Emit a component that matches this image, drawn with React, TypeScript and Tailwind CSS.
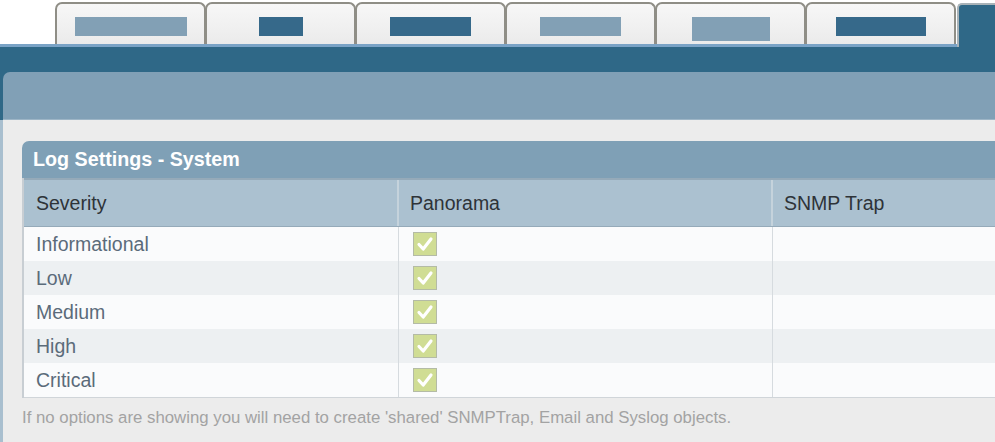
import React from "react";

const tabs = [
  { w: "w-[112px]", h: "h-[19px]", c: "bg-[#82a0b5]" },
  { w: "w-[44px]", h: "h-[19px]", c: "bg-[#36698a]" },
  { w: "w-[81px]", h: "h-[19px]", c: "bg-[#36698a]" },
  { w: "w-[81px]", h: "h-[19px]", c: "bg-[#82a0b5]" },
  { w: "w-[78px]", h: "h-[24px]", c: "bg-[#82a0b5]" },
  { w: "w-[90px]", h: "h-[19px]", c: "bg-[#36698a]" },
];

const rows = ["Informational", "Low", "Medium", "High", "Critical"];

function Check() {
  return (
    <div className="w-[24px] h-[24px] border border-[#b4bba6] bg-[#d0dd94] flex items-center justify-center">
      <svg width="18" height="16" viewBox="0 0 18 16">
        <path d="M3 8.5 L7.2 13 L15 3" fill="none" stroke="#ffffff" strokeWidth="3.2" strokeLinecap="round" strokeLinejoin="round" />
      </svg>
    </div>
  );
}

export default function App() {
  return (
    <div
      className="w-[995px] h-[442px] overflow-hidden bg-[#ececec] flex flex-col"
      style={{ fontFamily: '"Liberation Sans", Arial, sans-serif' }}
    >
      {/* tab strip */}
      <div className="flex h-[47px] shrink-0">
        <div className="w-[957px] flex flex-col bg-white">
          <div className="h-[44px] flex items-end pl-[55px]">
            {tabs.map((t, i) => (
              <div
                key={i}
                className={`w-[151px] h-[42px] ${i > 0 ? "-ml-px" : ""} border-[2px] border-b-0 border-[#8f8e86] rounded-t-[7px] bg-gradient-to-b from-[#f7f7f7] to-[#ebebeb] flex justify-center pt-[13px]`}
              >
                <div className={`${t.w} ${t.h} ${t.c}`} />
              </div>
            ))}
          </div>
          <div className="h-[3px] bg-[#7aa3c6]" />
        </div>
        <div className="flex-1 bg-white pt-[3px]">
          <div className="h-full bg-[#2f6887] rounded-tl-[5px] border-l-2 border-t-2 border-[#a9b3b8]" />
        </div>
      </div>

      {/* dark band + light header */}
      <div className="bg-[#2f6887] pt-[25px] pl-[3px] shrink-0">
        <div className="h-[48px] bg-[#81a0b6] rounded-tl-[7px] border-b border-[#9db5c6]" />
      </div>

      {/* content */}
      <div className="flex-1 border-l-[3px] border-[#a9bfcf] pl-[19px] pt-[21px]">
        <div className="rounded-tl-[7px] bg-[#7fa0b6] h-[37px] flex items-center pl-[11px] pt-[1px] text-white font-bold text-[19.7px]">
          Log Settings - System
        </div>
        <div className="border-l-2 border-[#c8ced3] bg-white">
          <div className="flex h-[49px] bg-[#abc1d0] border-t-2 border-[#9aabb7] border-b border-[#95aab9] text-[#2e3338] text-[19.5px]">
            <div className="w-[375px] flex items-center pl-[12px] pt-[2px] border-r-2 border-[#c5d3dc]">Severity</div>
            <div className="w-[374px] flex items-center pl-[11px] pt-[2px] border-r-2 border-[#c5d3dc]">Panorama</div>
            <div className="flex-1 flex items-center pl-[11px] pt-[2px]">SNMP Trap</div>
          </div>
          {rows.map((r, i) => (
            <div
              key={r}
              className={`flex h-[34px] text-[19.5px] text-[#5b6b7a] ${i % 2 ? "bg-[#edf0f2]" : "bg-[#fafbfc]"}`}
            >
              <div className="w-[375px] flex items-center pl-[12px] pt-[2px] border-r border-[#d6dbdf]">{r}</div>
              <div className="w-[374px] flex items-center pl-[14px] border-r border-[#d6dbdf]">
                <Check />
              </div>
              <div className="flex-1" />
            </div>
          ))}
          <div className="h-px bg-[#d0d5d9]" />
        </div>
        <div className="pt-[9px] text-[16.8px] leading-[22px] text-[#a3a3a3]">
          If no options are showing you will need to create 'shared' SNMPTrap, Email and Syslog objects.
        </div>
      </div>
    </div>
  );
}
